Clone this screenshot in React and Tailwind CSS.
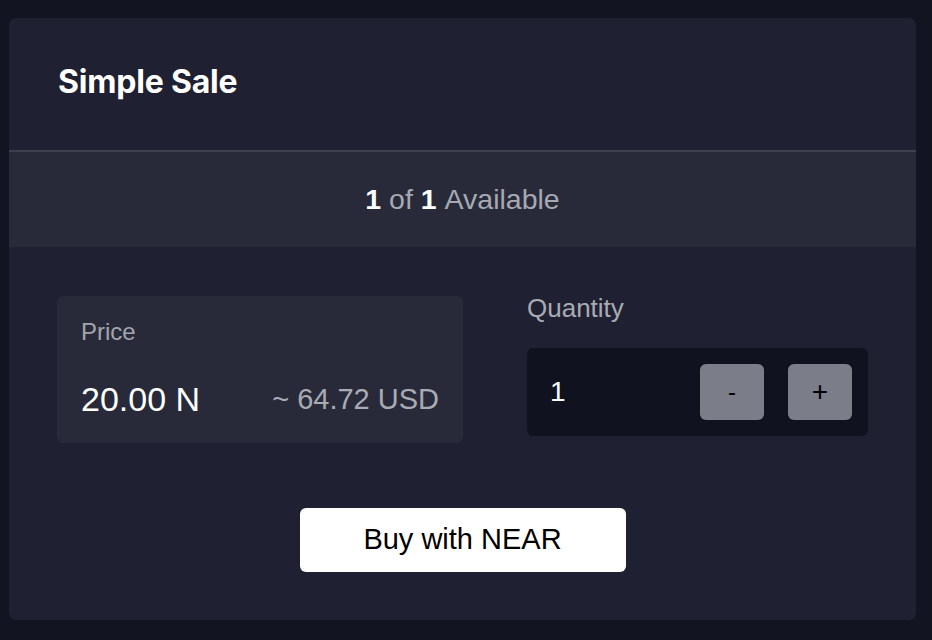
export default function App() {
  return (
    <div className="min-h-[640px] w-full bg-[#121422] pt-[18px] pl-[9px] pr-[16px] pb-[20px]" style={{ fontFamily: '"Liberation Sans", Arial, sans-serif' }}>
      <div className="w-[907px] h-[602px] rounded-[7px] bg-[#1f2031] overflow-hidden flex flex-col">
        {/* header */}
        <div className="h-[134px] shrink-0 flex items-center px-[49px] border-b-2 border-[#3e404f]">
          <h1 className="text-[32px] font-bold text-white tracking-[-0.2px] -mt-[4px]" style={{ fontFamily: 'Inter, "Liberation Sans", sans-serif' }}>
            Simple Sale
          </h1>
        </div>

        {/* availability strip */}
        <div className="h-[95px] shrink-0 bg-[#282a3a] flex items-center justify-center text-[28.5px] text-[#a6a8b2]">
          <span className="font-bold text-white">1</span>
          <span>&nbsp;of&nbsp;</span>
          <span className="font-bold text-white">1</span>
          <span>&nbsp;Available</span>
        </div>

        {/* body */}
        <div className="flex flex-col px-[48px] pt-[49px]">
          <div className="flex gap-[64px]">
            <div className="w-[406px] h-[147px] rounded-[6px] bg-[#282a3a] px-[24px] pt-[22px]">
              <div className="text-[24px] text-[#a3a5ae] leading-[28px]">Price</div>
              <div className="mt-[35px] flex items-center justify-between">
                <span className="text-[34px] text-white leading-[36px]">20.00 N</span>
                <span className="text-[29px] text-[#a9abb4] leading-[36px]">~ 64.72 USD</span>
              </div>
            </div>

            <div className="w-[341px] flex flex-col">
              <div className="text-[26px] text-[#a9abb4] leading-[30px] -mt-[3px]">Quantity</div>
              <div className="mt-[25px] h-[88px] rounded-[6px] bg-[#10121f] flex items-center pl-[23px] pr-[16px]">
                <span className="flex-1 text-[28px] text-white">1</span>
                <div className="flex gap-[24px]">
                  <button className="w-[64px] h-[56px] rounded-[6px] bg-[#7b7d88] text-black text-[24px] flex items-center justify-center">-</button>
                  <button className="w-[64px] h-[56px] rounded-[6px] bg-[#7b7d88] text-black text-[28px] flex items-center justify-center">+</button>
                </div>
              </div>
            </div>
          </div>

          <div className="flex justify-center mt-[65px]">
            <button className="w-[326px] h-[64px] rounded-[6px] bg-white text-black text-[29px] flex items-center justify-center">
              Buy with NEAR
            </button>
          </div>
        </div>
      </div>
    </div>
  )
}
